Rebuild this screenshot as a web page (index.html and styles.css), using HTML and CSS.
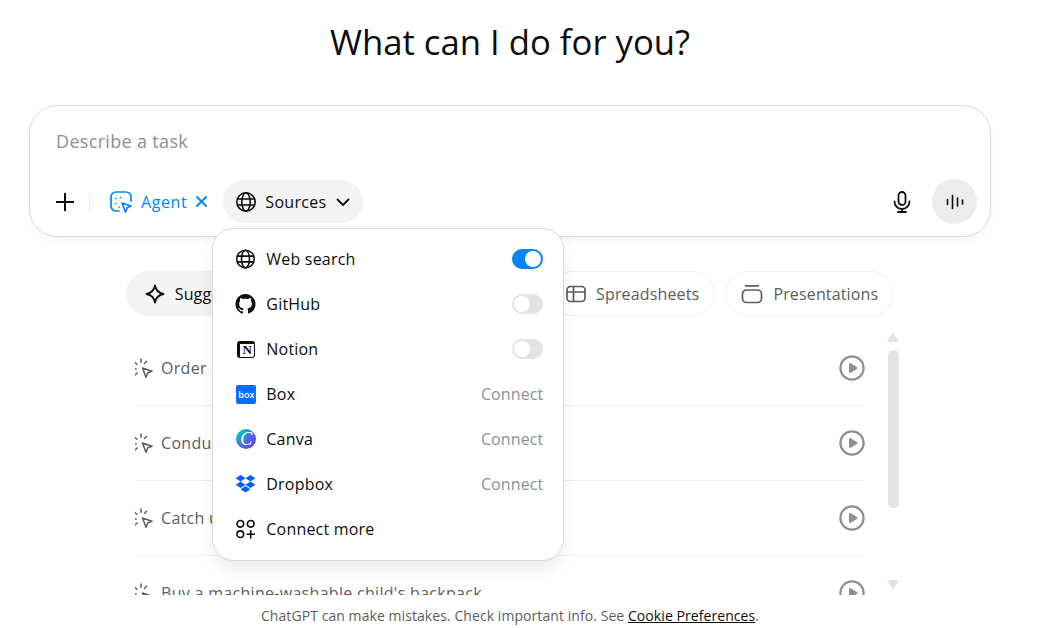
FILE: index.html
```html
<!DOCTYPE html>
<html lang="en">
<head>
    <meta charset="UTF-8">
    <title>ChatGPT</title>
    <link rel="stylesheet" href="styles.css">
</head>
<body>
    <svg class="defs" width="0" height="0" aria-hidden="true">
        <symbol id="globe" viewBox="0 0 22 22">
            <g fill="none" stroke="currentColor" stroke-width="1.6">
                <circle cx="11" cy="11" r="9.2"/>
                <ellipse cx="11" cy="11" rx="4.2" ry="9.2"/>
                <path d="M2 8h18M2 14h18"/>
            </g>
        </symbol>
        <symbol id="task" viewBox="0 0 22 22">
            <g fill="none" stroke="currentColor" stroke-width="1.5" stroke-linecap="round" stroke-linejoin="round">
                <path d="M10.5 11l9.5 3.2-4.2 1.6-1.8 4.4z"/>
                <path d="M9 2v3.2M2.5 5l2.4 2.2M1.2 12h3M14.5 4.2l-2 2.2M3 18l2.2-2"/>
            </g>
        </symbol>
        <symbol id="play" viewBox="0 0 26 26">
            <circle cx="13" cy="13" r="11.6" fill="none" stroke="currentColor" stroke-width="2.2"/>
            <path d="M10 9.2c0-.9.9-1.4 1.7-1l6.2 3.9c.7.4.7 1.4 0 1.8l-6.2 3.9c-.8.4-1.7-.1-1.7-1z" fill="currentColor"/>
        </symbol>
    </svg>

    <main class="page">
        <h1 class="title">What can I do for you?</h1>

        <section class="composer">
            <div class="placeholder">Describe a task</div>
            <div class="tools">
                <button class="icon-btn plus" aria-label="Add">
                    <svg width="20" height="20" viewBox="0 0 20 20"><path d="M10 1v18M1 10h18" stroke="currentColor" stroke-width="2" fill="none"/></svg>
                </button>
                <span class="divider"></span>
                <div class="agent">
                    <svg width="22" height="22" viewBox="0 0 22 22" fill="none" stroke="currentColor" stroke-width="1.7" stroke-linecap="round" stroke-linejoin="round">
                        <path d="M9 20H6a5 5 0 0 1-5-5V6a5 5 0 0 1 5-5h10a5 5 0 0 1 5 5v4"/>
                        <path d="M12 12l9 3-3.8 1.6L15.500 21z"/>
                        <path d="M6 7.500v.1M10.500 6.500v.1M5.500 12.500v.1M9 16v.1"/>
                    </svg>
                    <span>Agent</span>
                    <svg class="agent-x" width="13" height="13" viewBox="0 0 13 13"><path d="M1.500 1.500l10 10M11.500 1.500l-10 10" stroke="currentColor" stroke-width="1.900" fill="none"/></svg>
                </div>
                <div class="sources">
                    <svg width="22" height="22"><use href="#globe"/></svg>
                    <span>Sources</span>
                    <svg width="16" height="16" viewBox="0 0 16 16"><path d="M2.500 5.500L8 11l5.500-5.500" stroke="currentColor" stroke-width="1.800" fill="none" stroke-linecap="round" stroke-linejoin="round"/></svg>

                    <div class="menu">
                        <div class="menu-row">
                            <svg class="menu-icon" width="22" height="22"><use href="#globe"/></svg>
                            <span class="menu-label">Web search</span>
                            <span class="toggle on"></span>
                        </div>
                        <div class="menu-row">
                            <svg class="menu-icon" width="20" height="20" viewBox="0 0 16 16"><path fill="#0d0d0d" d="M8 0C3.580 0 0 3.580 0 8c0 3.540 2.290 6.530 5.470 7.590.4.070.55-.17.55-.38 0-.19-.01-.82-.01-1.490-2.010.37-2.530-.49-2.690-.94-.09-.23-.48-.94-.82-1.130-.28-.15-.68-.52-.01-.53.63-.01 1.080.58 1.230.82.72 1.210 1.870.87 2.330.66.070-.52.28-.87.51-1.070-1.780-.2-3.640-.89-3.640-3.950 0-.87.31-1.590.82-2.150-.08-.2-.36-1.020.08-2.120 0 0 .67-.21 2.200.82.64-.18 1.320-.27 2-.27.68 0 1.360.09 2 .27 1.530-1.040 2.200-.82 2.200-.82.44 1.100.16 1.920.08 2.120.51.56.82 1.270.82 2.150 0 3.070-1.870 3.750-3.650 3.950.29.25.54.73.54 1.480 0 1.070-.01 1.930-.01 2.200 0 .21.15.46.55.38A8.013 8.013 0 0 0 16 8c0-4.420-3.580-8-8-8z"/></svg>
                            <span class="menu-label">GitHub</span>
                            <span class="toggle"></span>
                        </div>
                        <div class="menu-row">
                            <span class="menu-icon notion">N</span>
                            <span class="menu-label">Notion</span>
                            <span class="toggle"></span>
                        </div>
                        <div class="menu-row">
                            <span class="menu-icon box">box</span>
                            <span class="menu-label">Box</span>
                            <span class="connect">Connect</span>
                        </div>
                        <div class="menu-row">
                            <span class="menu-icon canva">C</span>
                            <span class="menu-label">Canva</span>
                            <span class="connect">Connect</span>
                        </div>
                        <div class="menu-row">
                            <svg class="menu-icon" width="20" height="18" viewBox="0 0 24 22"><path fill="#0061fe" d="M6 0l6 4-6 4-6-4zM18 0l6 4-6 4-6-4zM6 8l6 4-6 4-6-4zM18 8l6 4-6 4-6-4zM6 17.300l6-4 6 4-6 4.200z"/></svg>
                            <span class="menu-label">Dropbox</span>
                            <span class="connect">Connect</span>
                        </div>
                        <div class="menu-row">
                            <svg class="menu-icon" width="20" height="20" viewBox="0 0 20 20" fill="none" stroke="#0d0d0d" stroke-width="1.600"><circle cx="4.800" cy="4.800" r="3.300"/><circle cx="15.200" cy="4.800" r="3.300"/><circle cx="4.800" cy="15.200" r="3.300"/><path d="M15.200 11v8.500M11 15.200h8.500"/></svg>
                            <span class="menu-label">Connect more</span>
                        </div>
                    </div>
                </div>
                <div class="tools-right">
                    <button class="icon-btn mic" aria-label="Dictate">
                        <svg width="20" height="22" viewBox="0 0 20 22" fill="none" stroke="currentColor" stroke-width="1.800" stroke-linecap="round"><rect x="6.500" y="1" width="7" height="13" rx="3.500"/><path d="M2.500 10.500a7.500 7.500 0 0 0 15 0M10 18v3M6 21h8"/></svg>
                    </button>
                    <button class="voice" aria-label="Voice">
                        <svg width="20" height="20" viewBox="0 0 20 20" stroke="currentColor" stroke-width="1.600" stroke-linecap="round"><path d="M2.500 7.500v5M7.500 3.500v13M12.500 6v8M17.500 8v4"/></svg>
                    </button>
                </div>
            </div>
        </section>

        <nav class="chips">
            <div class="chip active">
                <svg width="20" height="20" viewBox="0 0 20 20"><path d="M10 1.500c.9 5 3.500 7.600 8.500 8.500-5 .9-7.600 3.500-8.500 8.500-.9-5-3.500-7.600-8.500-8.500 5-.9 7.600-3.500 8.500-8.500z" fill="none" stroke="currentColor" stroke-width="1.800" stroke-linejoin="round"/></svg>
                <span>Suggested</span>
            </div>
            <div class="chip">
                <svg width="20" height="20" viewBox="0 0 20 20" fill="none" stroke="currentColor" stroke-width="1.700"><circle cx="9" cy="9" r="7"/><path d="M14 14l5 5"/></svg>
                <span>Research</span>
            </div>
            <div class="chip">
                <svg width="20" height="20" viewBox="0 0 20 20" fill="none" stroke="currentColor" stroke-width="1.700"><rect x="1.500" y="2.500" width="17" height="15" rx="3.500"/><path d="M2 15l5-5 4 4 3-3 4 4"/></svg>
                <span>Images</span>
            </div>
            <div class="chip">
                <svg width="20" height="20" viewBox="0 0 20 20" fill="none" stroke="currentColor" stroke-width="1.700"><rect x="1" y="2.500" width="18" height="15" rx="3.500"/><path d="M1 8h18M7.500 2.500v15"/></svg>
                <span>Spreadsheets</span>
            </div>
            <div class="chip">
                <svg width="22" height="20" viewBox="0 0 22 20" fill="none" stroke="currentColor" stroke-width="1.700" stroke-linecap="round"><rect x="1.500" y="6" width="19" height="12.500" rx="4"/><path d="M4.500 1.800h13"/></svg>
                <span>Presentations</span>
            </div>
        </nav>

        <section class="suggestions">
            <ul class="task-list">
                <li class="task">
                    <svg class="task-icon" width="22" height="22"><use href="#task"/></svg>
                    <span class="task-text">Order pickup from a nearby restaurant</span>
                    <svg class="task-play" width="26" height="26"><use href="#play"/></svg>
                </li>
                <li class="task">
                    <svg class="task-icon" width="22" height="22"><use href="#task"/></svg>
                    <span class="task-text">Conduct a competitive analysis</span>
                    <svg class="task-play" width="26" height="26"><use href="#play"/></svg>
                </li>
                <li class="task">
                    <svg class="task-icon" width="22" height="22"><use href="#task"/></svg>
                    <span class="task-text">Catch up on today's news</span>
                    <svg class="task-play" width="26" height="26"><use href="#play"/></svg>
                </li>
                <li class="task">
                    <svg class="task-icon" width="22" height="22"><use href="#task"/></svg>
                    <span class="task-text">Buy a machine-washable child's backpack</span>
                    <svg class="task-play" width="26" height="26"><use href="#play"/></svg>
                </li>
            </ul>
            <div class="scrollbar" aria-hidden="true">
                <span class="arrow up"></span>
                <span class="thumb"></span>
                <span class="arrow down"></span>
            </div>
        </section>

        <footer class="footer">ChatGPT can make mistakes. Check important info. See <a href="#">Cookie Preferences</a>.</footer>
    </main>
</body>
</html>
```

FILE: styles.css
```css
* {
    box-sizing: border-box;
}
html, body {
    height: 100%;
    margin: 0;
    overflow: hidden;
}
body {
    background: #fff;
    color: #0d0d0d;
    font-family: "Open Sans", "Noto Sans", sans-serif;
    font-size: 16px;
    letter-spacing: .2px;
}
button {
    padding: 0;
    border: 0;
    background: none;
    color: inherit;
}
.defs {
    display: block;
    height: 0;
}

.page {
    display: flex;
    flex-direction: column;
    width: 962px;
    height: 628px;
    margin-left: 29px;
}
.title {
    height: 48px;
    margin: 18px 0 39px;
    font-size: 34.700px;
    font-weight: 400;
    line-height: 48px;
    letter-spacing: 0;
    text-align: center;
}

/* composer */
.composer {
    display: flex;
    flex-direction: column;
    height: 132px;
    padding: 20px 13px 12px 26px;
    border: 1px solid #d9d9d9;
    border-radius: 28px;
    box-shadow: 0 4px 8px rgba(0, 0, 0, .04);
}
.placeholder {
    height: 30px;
    font-size: 18px;
    line-height: 30px;
    letter-spacing: .33px;
    color: #8f8f8f;
}
.tools {
    display: flex;
    align-items: center;
    height: 45px;
    margin-top: auto;
}
.icon-btn {
    display: flex;
    align-items: center;
    justify-content: center;
}
.plus {
    width: 20px;
    height: 20px;
    margin-left: -1px;
}
.divider {
    width: 1px;
    height: 17px;
    margin: 0 20px 0 14px;
    background: #ececec;
}
.agent {
    display: flex;
    align-items: center;
    color: #0285ff;
}
.agent span {
    margin-left: 9px;
    letter-spacing: .6px;
}
.agent-x {
    margin-left: 8px;
}
.sources {
    position: relative;
    display: flex;
    align-items: center;
    width: 140px;
    height: 43px;
    margin-left: 15px;
    padding-left: 12px;
    border-radius: 22px;
    background: #f3f3f3;
}
.sources > span {
    margin: 0 9px 0 8px;
    letter-spacing: .3px;
}
.tools-right {
    display: flex;
    align-items: center;
    margin-left: auto;
}
.mic {
    width: 20px;
    height: 22px;
    margin-right: 20px;
}
.voice {
    display: flex;
    align-items: center;
    justify-content: center;
    width: 45px;
    height: 45px;
    border-radius: 50%;
    background: #ececec;
}

/* sources dropdown */
.menu {
    position: absolute;
    top: 48px;
    left: -11px;
    z-index: 5;
    width: 352px;
    padding: 8px 20px 8px 22px;
    border: 1px solid #d9d9d9;
    border-radius: 22px;
    background: #fff;
    box-shadow: 0 8px 16px rgba(0, 0, 0, .08);
}
.menu-row {
    display: flex;
    align-items: center;
    height: 45px;
    padding-bottom: 1px;
}
.menu-icon {
    flex: none;
    margin-right: 10px;
}
.menu-row svg.menu-icon {
    width: 21px;
}
.menu-label {
    flex: 1;
}
.connect {
    letter-spacing: .1px;
    color: #8f8f8f;
}
.toggle {
    position: relative;
    width: 31px;
    height: 20px;
    border-radius: 10px;
    background: #e3e3e3;
}
.toggle::after {
    content: "";
    position: absolute;
    top: 2px;
    left: 2px;
    width: 16px;
    height: 16px;
    border-radius: 50%;
    background: #fff;
}
.toggle.on {
    background: #0285ff;
}
.toggle.on::after {
    left: 13px;
}
.notion {
    display: flex;
    align-items: center;
    justify-content: center;
    width: 18px;
    height: 17px;
    margin: 0 11px 0 2px;
    border: 2px solid #0d0d0d;
    border-width: 3px 1px 1px 3px;
    border-radius: 3px;
    font-family: "Liberation Serif", serif;
    font-size: 13px;
    font-weight: 700;
    letter-spacing: 0;
}
.box {
    display: flex;
    align-items: center;
    justify-content: center;
    width: 20px;
    height: 19px;
    margin: 0 10px 0 1px;
    border-radius: 2px;
    background: #0a6cff;
    color: #fff;
    font-size: 9px;
    font-weight: 600;
    letter-spacing: 0;
}
.canva {
    display: flex;
    align-items: center;
    justify-content: center;
    width: 20px;
    height: 20px;
    margin: 0 10px 0 1px;
    border-radius: 50%;
    background: linear-gradient(135deg, #00c4cc 15%, #5a5fe0 60%, #7d2ae8);
    color: #fff;
    font-family: "Liberation Serif", serif;
    font-size: 18px;
    font-style: italic;
    letter-spacing: 0;
}

/* suggestion chips */
.chips {
    display: flex;
    gap: 10px;
    justify-content: center;
    height: 45px;
    margin: 34px 0 15px;
    letter-spacing: .15px;
}
.chip {
    display: flex;
    flex: none;
    gap: 10px;
    align-items: center;
    height: 45px;
    padding: 0 15px;
    border: 1px solid #f0f0f0;
    border-radius: 23px;
    color: #5d5d5d;
}
.chip.active {
    padding: 0 18px;
    border-color: #f3f3f3;
    background: #f3f3f3;
    color: #0d0d0d;
}

/* task list */
.suggestions {
    display: flex;
    gap: 23px;
    height: 264px;
    margin-left: 106px;
}
.task-list {
    width: 730px;
    margin: 0;
    padding: 0;
    overflow: hidden;
    list-style: none;
}
.task {
    display: flex;
    align-items: center;
    height: 75px;
    border-bottom: 1px solid #f0f0f0;
    color: #5d5d5d;
    letter-spacing: .3px;
}
.task-icon {
    flex: none;
    margin: 0 7px 0 -3px;
}
.task-text {
    flex: 1;
}
.task-play {
    flex: none;
    color: #8f8f8f;
}
.scrollbar {
    display: flex;
    flex-direction: column;
    width: 11px;
    padding: 1px 0 5px;
}
.thumb {
    width: 11px;
    height: 158px;
    margin: 8px 0 auto;
    border-radius: 6px;
    background: #e3e3e3;
}
.arrow {
    width: 0;
    height: 0;
    margin-left: -1px;
    border-right: 6.500px solid transparent;
    border-left: 6.500px solid transparent;
}
.arrow.up {
    border-bottom: 10px solid #e3e3e3;
}
.arrow.down {
    border-top: 10px solid #e3e3e3;
}

.footer {
    flex: 1;
    padding-top: 11px;
    font-size: 14px;
    line-height: 20px;
    letter-spacing: .07px;
    color: #5d5d5d;
    text-align: center;
}
.footer a {
    color: #0d0d0d;
}
```
